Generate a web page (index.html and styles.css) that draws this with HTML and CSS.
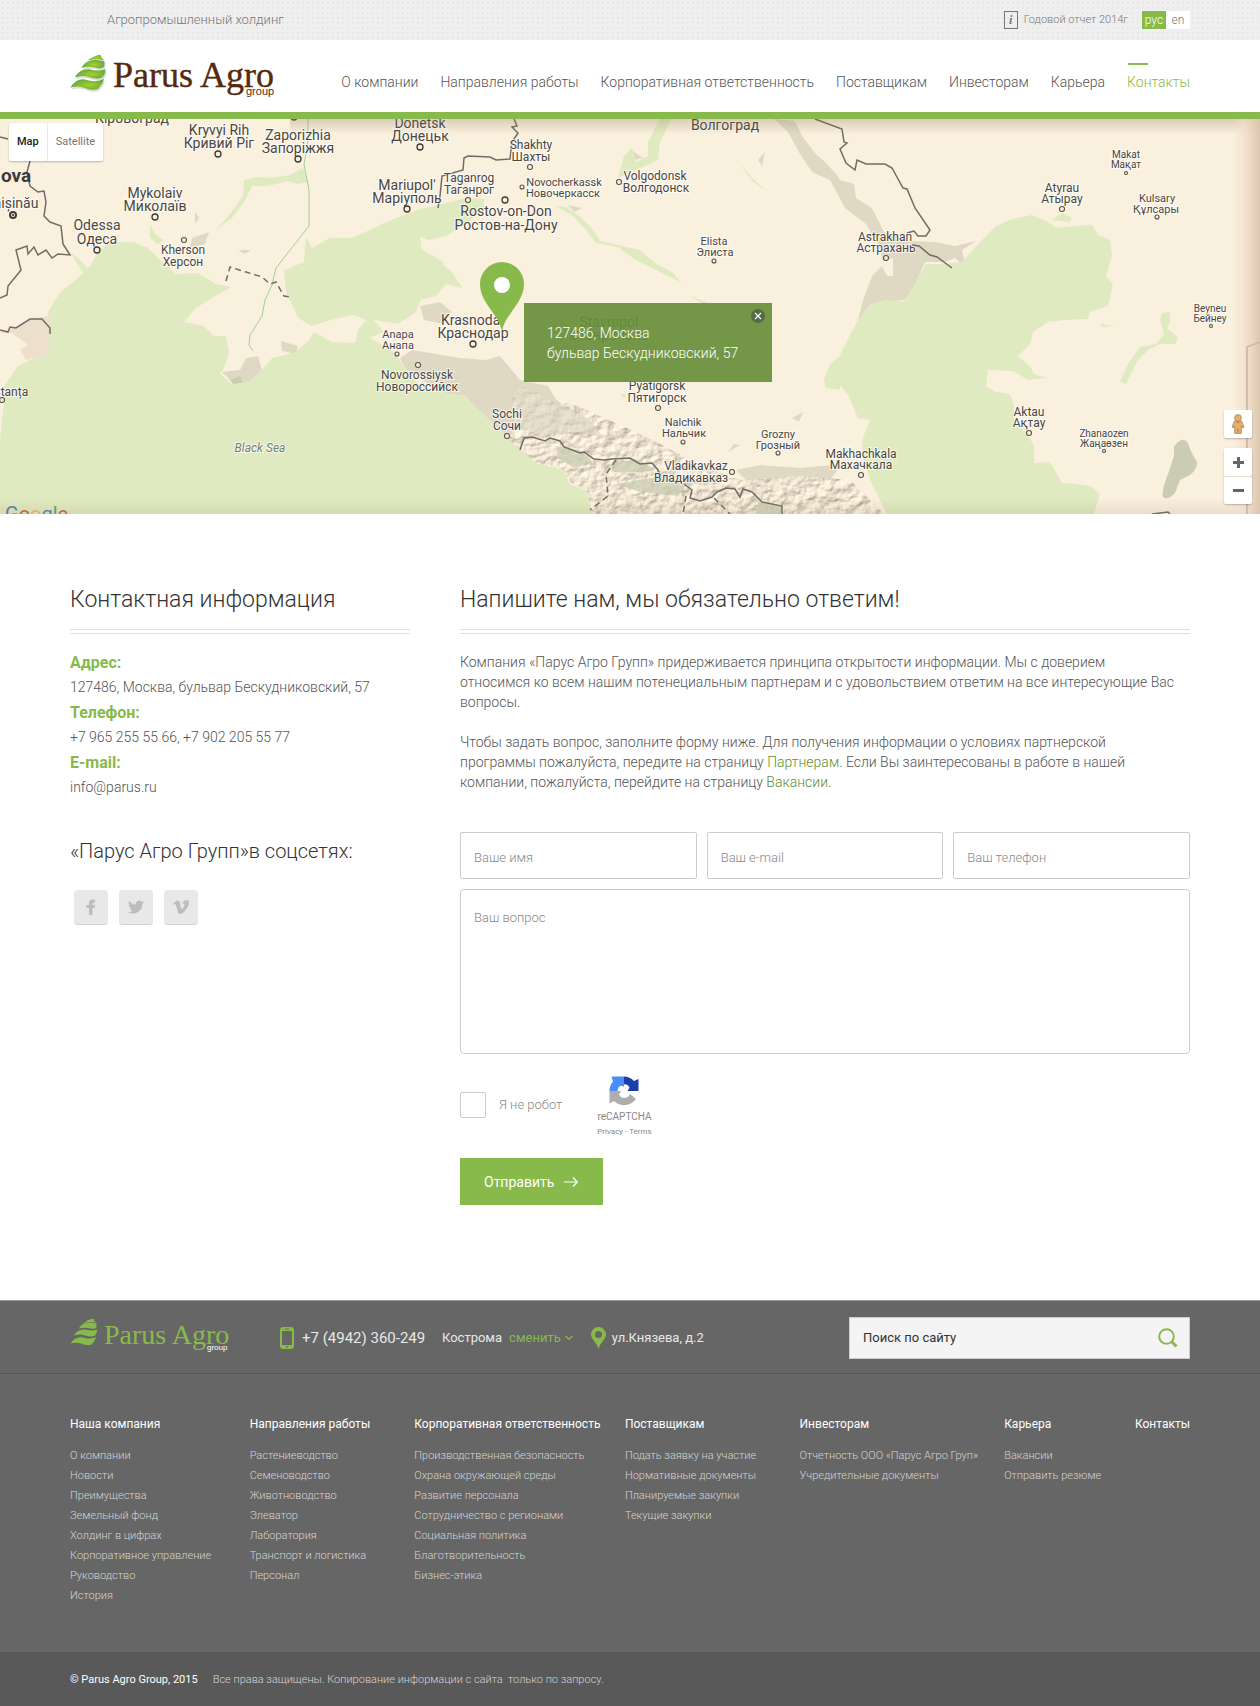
FILE: index.html
```html
<!DOCTYPE html>
<html lang="ru">
<head>
<meta charset="utf-8">
<title>Контакты — Parus Agro Group</title>
<link rel="stylesheet" href="styles.css">
</head>
<body>
<svg width="0" height="0" class="defs" aria-hidden="true">
  <defs>
    <symbol id="leaf" viewBox="0 0 108 112">
      <path d="M52 20 Q70 5 91 2 Q94 12 103 19 Q80 12 52 20Z"/>
      <path d="M33 42 Q47 17 77 18 Q92 20 104 22 L103 38 Q98 46 82 42 Q55 35 33 42Z"/>
      <path d="M14 71 Q28 44 58 46 Q86 54 107 46 Q106 62 98 70 Q84 78 60 70 Q34 62 14 71Z"/>
      <path d="M0 102 Q18 74 44 77 Q78 88 103 76 Q98 92 84 106 Q64 112 42 102 Q20 95 0 102Z"/>
    </symbol>
  </defs>
</svg>

<div class="topbar">
  <div class="wrap topbar-row">
    <p class="tagline">Агропромышленный холдинг</p>
    <a class="report" href="#"><span class="info-icon">i</span>Годовой отчет 2014г</a>
    <div class="langs"><a class="lang lang-on" href="#">рус</a><a class="lang" href="#">en</a></div>
  </div>
</div>

<header class="header">
  <div class="wrap header-row">
    <a class="logo" href="#" aria-label="Parus Agro group">
      <svg width="210" height="48" viewBox="0 0 210 48">
        <defs>
          <radialGradient id="leafFill" cx=".55" cy=".55" r=".6">
            <stop offset="0" stop-color="#a9cf2b"/><stop offset="1" stop-color="#58a83a"/>
          </radialGradient>
        </defs>
        <use href="#leaf" x="1" y="4" width="36" height="37" fill="#dcdcdc"/>
        <use href="#leaf" x="0" y="2" width="36" height="37" fill="url(#leafFill)"/>
        <text class="logo-name" x="43" y="35">Parus Agro</text>
        <text class="logo-sub" x="176" y="43">group</text>
      </svg>
    </a>
    <nav class="nav">
      <a href="#">О компании</a>
      <a href="#">Направления работы</a>
      <a href="#">Корпоративная ответственность</a>
      <a href="#">Поставщикам</a>
      <a href="#">Инвесторам</a>
      <a href="#">Карьера</a>
      <a href="#" class="nav-on">Контакты</a>
    </nav>
  </div>
</header>

<section class="map">
  <svg class="map-canvas" viewBox="0 119 1260 395" preserveAspectRatio="xMidYMid slice">
    <defs>
      <filter id="relief" x="0" y="0" width="100%" height="100%" color-interpolation-filters="sRGB">
        <feTurbulence type="fractalNoise" baseFrequency=".09 .12" numOctaves="4" seed="4" result="n"/>
        <feDiffuseLighting in="n" surfaceScale="2" diffuseConstant="1.12" lighting-color="#f4e8d4" result="l"><feDistantLight azimuth="225" elevation="60"/></feDiffuseLighting>
        <feComposite in="l" in2="SourceGraphic" operator="in"/>
      </filter>
      <linearGradient id="topShade" x2="0" y2="1"><stop stop-color="#8a7550" stop-opacity=".28"/><stop offset="1" stop-color="#8a7550" stop-opacity="0"/></linearGradient>
      <linearGradient id="botShade" x2="0" y2="1"><stop stop-color="#8a7550" stop-opacity="0"/><stop offset="1" stop-color="#8a7550" stop-opacity=".14"/></linearGradient>
      <linearGradient id="rightShade"><stop stop-color="#f3dcc8" stop-opacity="0"/><stop offset=".4" stop-color="#f3dcc8" stop-opacity=".6"/><stop offset="1" stop-color="#d8c2aa" stop-opacity=".9"/></linearGradient>
    </defs>
    <rect y="119" width="1260" height="395" fill="#faf0de"/>
    <!-- relief -->
    <g fill="#dfd9c4">
      <path d="M774 119 L795 121 L802 136 L815 153 L826 163 L836 174 L840 180 L854 184 L856 198 L872 208 L884 232 L910 241 L935 242 L955 246 L976 241 L962 250 L966 268 L955 258 L945 262 L925 262 L915 285 L905 300 L885 302 L868 308 L857 324 L863 300 L872 276 L884 264 L878 244 L866 224 L845 208 L830 180 L812 172 L800 154 L788 132Z"/>
      <path d="M0 333 L20 325 L34 318 L50 316 L53 330 L47 356 L26 360 L20 350 L28 345 L12 333Z" fill="#ece0cc"/>
      <path d="M400 358 L412 350 L460 358 L486 360 L500 356 L520 380 L548 386 L556 400 L590 420 L600 436 L560 430 L540 440 L520 430 L505 440 L488 420 L465 396 L440 392 L405 368Z"/>
      <path d="M736 470 L760 465 L800 468 L842 464 L830 480 L790 482 L750 484Z"/>
      <path d="M222 372 L240 370 L246 358 L258 356 L262 370 L250 382 L234 384Z"/>
      <path d="M281 341 L298 346 L296 354 L282 351Z M180 322 L186 316 L182 325Z M136 245 L148 248 L146 252Z M238 250 L251 250 L245 254Z M192 238 L209 232 L205 244 L190 248Z M195 212 L199 218 L195 224Z"/>
      <path d="M420 306 L440 302 L452 312 L444 324 L424 320Z M568 205 L582 208 L574 212Z M758 160 L765 152 L762 166Z M630 149 L643 158 L634 160Z M740 445 L728 452 L734 444Z M792 418 L803 412 L799 422Z"/>
    </g>
    <path d="M505 440 L516 424 L512 396 L524 384 L548 400 L575 405 L600 416 L640 434 L668 448 L700 466 L740 480 L800 476 L850 480 L884 514 L592 514 L586 490 L570 482 L562 470 L536 462Z" fill="#f4e9d6" filter="url(#relief)" opacity=".75"/>
    <path d="M490 360 L520 380 L548 388 L560 404 L590 420 L604 438 L570 430 L544 436 L522 424 L512 400Z" fill="#dfd9c4" opacity=".6"/>
    <g fill="#c9cdb2" opacity=".75">
      <path d="M556 446 L580 450 L592 462 L575 468 L558 458Z M612 462 L640 460 L655 470 L640 472 L615 472Z M616 484 L650 478 L690 480 L678 496 L640 492Z M758 502 L782 506 L780 514 L758 514Z"/>
    </g>
    <path d="M1174 447 Q1182 435 1188 443 Q1190 451 1197 462 Q1197 470 1190 475 L1180 480 L1175 493 Q1168 501 1163 497 Q1161 492 1168 474 L1174 456Z" fill="#cbccb2"/>
    <path d="M230 380 L240 376 L243 383 L234 385Z" fill="#cbccb2"/>
    <!-- water -->
    <g fill="#e0eac0">
      <path d="M0 514 L0 440 L2 418 L4 404 L1 392 L8 380 L18 366 L30 360 L46 356 L52 332 L48 312 L60 292 L76 280 L90 266 L98 252 L110 242 L134 242 L150 250 L162 262 L176 274 L198 273 L216 284 L232 287 L212 298 L196 308 L184 322 L204 326 L214 336 L226 336 L229 352 L226 364 L220 374 L232 384 L250 382 L262 370 L272 358 L296 352 L309 340 L314 332 L332 342 L355 343 L358 330 L366 320 L354 315 L330 320 L312 326 L298 318 L294 308 L286 292 L284 270 L304 262 L306 237 L312 248 L330 238 L352 238 L374 228 L396 218 L420 209 L446 203 L466 198 L484 199 L484 208 L466 224 L446 236 L428 240 L420 236 L422 250 L444 262 L432 284 L424 292 L416 312 L398 324 L374 320 L384 332 L370 338 L392 350 L404 366 L420 386 L440 392 L464 396 L490 420 L520 450 L537 463 L563 470 L570 484 L587 491 L592 514Z"/>
      <path d="M887 514 L880 500 L870 480 L863 455 L862 440 L870 420 L858 418 L848 395 L840 385 L835 365 L850 335 L858 320 L870 304 L886 300 L904 302 L914 286 L926 264 L940 264 L962 262 L978 244 L996 226 L1012 219 L1032 215 L1048 222 L1056 228 L1074 226 L1092 225 L1098 235 L1110 240 L1112 256 L1106 276 L1113 284 L1108 306 L1090 312 L1088 319 L1064 320 L1048 322 L1033 332 L1030 344 L1018 356 L1030 366 L1034 374 L1046 378 L1028 380 L1013 371 L988 370 L986 386 L996 392 L1010 394 L1014 404 L1014 420 L1028 435 L1034 446 L1034 463 L1050 462 L1062 483 L1076 484 L1090 486 L1100 494 L1094 514Z"/>
      <path d="M243 196 L244 180 L256 177 L272 178 L290 175 L303 168 L308 182 L298 184 L288 181 L268 186 L252 186 L244 202 L232 218 L216 230 L230 214Z"/>
      <path d="M70 252 L80 260 L94 276 L86 278Z M150 224 L155 234 L164 240 L158 244 L150 238Z"/>
      <path d="M660 119 L671 119 L660 142 L658 160 L640 168 L618 178 L624 156 L632 148 L636 162 L648 156 L648 142Z"/>
      <path d="M555 206 L566 207 L579 216 L592 228 L600 241 L622 246 L640 250 L656 264 L672 272 L681 282 L660 272 L636 260 L618 247 L596 243 L586 230 L572 215Z"/>
      <path d="M420 250 L440 262 L452 272 L462 288 L446 284 L436 296 L420 300Z M690 296 L706 302 L707 298 L706 306Z M737 160 L752 178 L768 192 L752 181Z"/>
      <path d="M1162 313 L1170 312 L1170 322 L1167 328 L1178 338 L1175 344 L1160 344 L1148 350 L1138 360 L1126 384 L1120 382 L1128 364 L1140 347 L1156 344 L1164 334 L1160 320Z"/>
      <path d="M1052 220 L1062 213 L1072 218 L1070 222Z M824 380 L830 364 L840 356 L840 390 L826 388Z M620 394 L626 394 L624 398Z M1100 324 L1116 326 L1102 327Z"/>
    </g>
    <path d="M880 262 L893 258 L893 276 L887 276Z" fill="#faf0de"/>
    <!-- rivers and borders -->
    <g fill="none" stroke="#9fd09a" stroke-width="1">
      <path d="M308 119 L308 140 L304 165 L309 190 L309 226 L276 268 L272 285 L265 300 L262 316 L250 335 L249 345 L253 351"/>
    </g>
    <g fill="none" stroke="#736b66" stroke-width="1.5">
      <path d="M0 137 L8 139 M30 161 L27 172 L30 186 L38 192 L44 191 L46 202 L44 216 L50 222 L61 226 L63 244 L70 255 L58 254 L52 258 L46 250 L38 255 L34 247 L28 254 L27 246 L16 250 L21 270 L8 286 L7 295 L0 298"/>
      <path d="M0 330 L8 332 L10 327 L16 328 L30 319 L42 319 L50 328 L50 334"/>
      <path d="M514 119 L517 126 L512 127 L518 133 L512 142 L510 159 L496 160 L490 157 L468 156 L464 158 L463 170 L442 176 L440 196 L438 208"/>
      <path d="M815 119 L842 129 L844 142 L847 143 L840 149 L846 163 L855 170 L857 160 L866 164 L885 164 L892 168 L903 188 L907 189 L915 208 L930 230 L926 236 L918 236 L914 231 L907 233 M912 245 L919 246 L930 255 L937 257 L952 268"/>
      <path d="M520 450 L524 438 L532 437 L545 441 L550 438 L560 441 L564 447 L580 453 L584 452 L594 459 L604 460 L612 459 L630 458 L640 464 L652 463 L658 470 L660 476 M684 484 L692 490 L690 498 L700 501 L712 497 L717 492 L726 488 L735 489 L740 497 L743 489 L752 492 L762 502 L782 506 L782 514"/>
      <path d="M1260 342 L1247 347 L1247 514 M1152 514 L1168 512 L1170 514"/>
      <path stroke-dasharray="6 4" d="M226 281 L230 267 L246 272 L262 277 L270 284 L276 282 L284 296 L291 297 M616 460 L606 474 L608 496 L590 510 M686 496 L683 514 M714 498 L730 514"/>
    </g>
    <!-- labels -->
    <g class="city city-l">
      <text x="132" y="123">Кіровоград</text>
      <text x="219" y="135">Kryvyi Rih</text><text x="219" y="148">Кривий Ріг</text>
      <text x="298" y="140">Zaporizhia</text><text x="298" y="153">Запоріжжя</text>
      <text x="420" y="128">Donetsk</text><text x="420" y="141">Донецьк</text>
      <text x="407" y="190">Mariupol'</text><text x="407" y="203">Маріуполь</text>
      <text x="155" y="198">Mykolaiv</text><text x="155" y="211">Миколаїв</text>
      <text x="97" y="230">Odessa</text><text x="97" y="244">Одеса</text>
      <text x="16" y="208">hișinău</text>
      <text x="506" y="216">Rostov-on-Don</text><text x="506" y="230">Ростов-на-Дону</text>
      <text x="725" y="130">Волгоград</text>
      <text x="473" y="325">Krasnodar</text><text x="473" y="338">Краснодар</text>
      <text x="609" y="327">Stavropol</text><text x="609" y="340">Ставрополь</text>
    </g>
    <g class="city city-m">
      <text x="183" y="254">Kherson</text><text x="183" y="266">Херсон</text>
      <text x="469" y="182">Taganrog</text><text x="469" y="194">Таганрог</text>
      <text x="531" y="149">Shakhty</text><text x="531" y="161">Шахты</text>
      <text x="655" y="180">Volgodonsk</text><text x="656" y="192">Волгодонск</text>
      <text x="885" y="241">Astrakhan</text><text x="886" y="252">Астрахань</text>
      <text x="1062" y="192">Atyrau</text><text x="1062" y="203">Атырау</text>
      <text x="1029" y="416">Aktau</text><text x="1029" y="427">Ақтау</text>
      <text x="861" y="458">Makhachkala</text><text x="861" y="469">Махачкала</text>
      <text x="696" y="470">Vladikavkaz</text><text x="691" y="482">Владикавказ</text>
      <text x="657" y="390">Pyatigorsk</text><text x="657" y="402">Пятигорск</text>
      <text x="507" y="418">Sochi</text><text x="507" y="430">Сочи</text>
      <text x="417" y="379">Novorossiysk</text><text x="417" y="391">Новороссийск</text>
      <text x="8" y="396">nstanța</text>
    </g>
    <g class="city city-s">
      <text x="564" y="186">Novocherkassk</text><text x="563" y="197">Новочеркасск</text>
      <text x="714" y="245">Elista</text><text x="715" y="256">Элиста</text>
      <text x="1157" y="202">Kulsary</text><text x="1156" y="213">Құлсары</text>
      <text x="778" y="438">Grozny</text><text x="778" y="449">Грозный</text>
      <text x="683" y="426">Nalchik</text><text x="684" y="437">Нальчик</text>
      <text x="398" y="338">Anapa</text><text x="398" y="349">Анапа</text>
    </g>
    <g class="city city-xs">
      <text x="1126" y="158">Makat</text><text x="1126" y="168">Мақат</text>
      <text x="1210" y="312">Beyneu</text><text x="1210" y="322">Бейнеу</text>
      <text x="1104" y="437">Zhanaozen</text><text x="1104" y="447">Жаңаөзен</text>
    </g>
    <text class="sea" x="260" y="452">Black Sea</text>
    <text class="country" x="1" y="182">ova</text>
    <g fill="#faf0de" stroke="#3d3a36" stroke-width="1.3">
      <circle cx="218" cy="154" r="3"/><circle cx="298" cy="159" r="3"/><circle cx="420" cy="147" r="3"/><circle cx="407" cy="209" r="3"/><circle cx="155" cy="217" r="3"/><circle cx="97" cy="250" r="3"/><circle cx="505" cy="200" r="3"/><circle cx="473" cy="344" r="3"/><circle cx="13" cy="215" r="3" stroke-width="2"/><circle cx="294" cy="117" r="3"/>
    </g>
    <circle cx="13" cy="215" r="1" fill="#222"/>
    <g fill="#faf0de" stroke="#55514b" stroke-width="1.1">
      <circle cx="184" cy="240" r="2.5"/><circle cx="468" cy="200" r="2.5"/><circle cx="530" cy="167" r="2.5"/><circle cx="619" cy="182" r="2.5"/><circle cx="522" cy="187" r="2"/><circle cx="714" cy="261" r="2"/><circle cx="886" cy="258" r="2.5"/><circle cx="1062" cy="209" r="2.5"/><circle cx="1157" cy="217" r="2"/><circle cx="1029" cy="433" r="2.5"/><circle cx="861" cy="475" r="2.5"/><circle cx="778" cy="453" r="2"/><circle cx="683" cy="442" r="2"/><circle cx="732" cy="472" r="2.5"/><circle cx="658" cy="408" r="2.5"/><circle cx="507" cy="436" r="2.5"/><circle cx="397" cy="354" r="2"/><circle cx="418" cy="365" r="2.5"/><circle cx="2" cy="400" r="2.5"/><circle cx="1126" cy="173" r="1.5"/><circle cx="1211" cy="326" r="1.5"/><circle cx="1104" cy="451" r="1.5"/>
    </g>
    <text class="google" x="5" y="521"><tspan fill="#5b7fc0">G</tspan><tspan fill="#c8604f">o</tspan><tspan fill="#e8b878">o</tspan><tspan fill="#5b7fc0">g</tspan><tspan fill="#6aa068">l</tspan><tspan fill="#c8604f">e</tspan></text>
    <rect x="290" y="119" width="970" height="15" fill="url(#topShade)"/>
    <rect y="498" width="1260" height="16" fill="url(#botShade)"/>
    <rect x="1232" y="119" width="28" height="395" fill="url(#rightShade)"/>
    <path d="M502 331 C499 314 480 303 480 284 A22 22 0 0 1 524 284 C524 303 505 314 502 331Z" fill="#87ba4b"/>
    <circle cx="502" cy="285" r="8" fill="#fff"/>
  </svg>
  <div class="map-types"><button type="button" class="map-type map-type-on">Map</button><button type="button" class="map-type">Satellite</button></div>
  <div class="balloon">
    <p>127486, Москва<br>бульвар Бескудниковский, 57</p>
    <button type="button" class="balloon-close" aria-label="Закрыть">
      <svg width="14" height="14" viewBox="0 0 14 14"><circle cx="7" cy="7" r="7" fill="#566b45"/><path d="M4 4 L10 10 M10 4 L4 10" stroke="#fff" stroke-width="1.200"/></svg>
    </button>
  </div>
  <div class="map-tools">
    <button type="button" class="tool" aria-label="Street View">
      <svg width="14" height="20" viewBox="0 0 14 20" fill="#e6b06c" stroke="#a77c45" stroke-width=".7"><path d="M3.500 7 H10.500 L13 13 L11.500 14 L10.300 12 V19.500 H7.500 V15 H6.500 V19.500 H3.700 V12 L2.500 14 L1 13Z"/><circle cx="7" cy="4" r="3.400"/><path d="M5.500 7.500 L7 9.500 L8.500 7.500Z" fill="#d9694b" stroke="none"/></svg>
    </button>
    <div class="zoom">
      <button type="button" class="tool" aria-label="Приблизить"><svg width="11" height="11"><path d="M0 5.500H11M5.500 0V11" stroke="#666" stroke-width="3"/></svg></button>
      <button type="button" class="tool" aria-label="Отдалить"><svg width="11" height="11"><path d="M0 5.500H11" stroke="#666" stroke-width="3"/></svg></button>
    </div>
  </div>
</section>

<main class="wrap content">
  <section class="info">
    <h1 class="title">Контактная информация</h1>
    <dl class="contacts">
      <dt>Адрес:</dt><dd>127486, Москва, бульвар Бескудниковский, 57</dd>
      <dt>Телефон:</dt><dd>+7 965 255 55 66, +7 902 205 55 77</dd>
      <dt>E-mail:</dt><dd>info@parus.ru</dd>
    </dl>
    <h2 class="subtitle">«Парус Агро Групп»в соцсетях:</h2>
    <div class="socials">
      <a href="#" class="social" aria-label="Facebook"><svg width="18" height="18" viewBox="0 0 18 18"><path d="M7 17V10H4.500V7H7V5Q7 1.500 10.500 1.500H13V4.500H11.300Q10.500 4.500 10.500 5.300V7H13L12.600 10H10.500V17Z"/></svg></a>
      <a href="#" class="social" aria-label="Twitter"><svg width="16" height="16" viewBox="0 0 24 24"><path d="M24 4.600a10 10 0 0 1-2.800.8 5 5 0 0 0 2.100-2.700 10 10 0 0 1-3.100 1.200 4.900 4.900 0 0 0-8.400 4.500A14 14 0 0 1 1.700 3.100a4.900 4.900 0 0 0 1.500 6.600 5 5 0 0 1-2.200-.6v.1a4.900 4.900 0 0 0 3.900 4.800 5 5 0 0 1-2.200.1 4.900 4.900 0 0 0 4.600 3.400A10 10 0 0 1 0 19.500 14 14 0 0 0 21.500 7.100 10 10 0 0 0 24 4.600z"/></svg></a>
      <a href="#" class="social" aria-label="Vimeo"><svg width="16" height="16" viewBox="0 0 24 24"><path d="M24 6.500c-.1 2.300-1.700 5.500-4.900 9.600-3.300 4.300-6.100 6.400-8.400 6.400-1.400 0-2.600-1.300-3.600-3.900L5.200 11.500C4.500 8.900 3.700 7.600 2.900 7.600c-.2 0-.8.400-1.800 1.100L0 7.300c1.200-1 2.300-2.100 3.500-3.100C5 2.900 6.200 2.200 7 2.100c1.900-.2 3 1.100 3.500 3.800.5 2.900.8 4.700 1 5.400.5 2.500 1.100 3.700 1.800 3.700.5 0 1.300-.8 2.300-2.400s1.600-2.900 1.600-3.700c.2-1.400-.4-2.100-1.600-2.100-.6 0-1.200.1-1.800.4 1.200-3.900 3.500-5.800 6.800-5.700 2.500.1 3.600 1.700 3.400 5z"/></svg></a>
    </div>
  </section>

  <section class="write">
    <h2 class="title">Напишите нам, мы обязательно ответим!</h2>
    <p class="text">Компания «Парус Агро Групп» придерживается принципа открытости информации. Мы с доверием<br>относимся ко всем нашим потенециальным партнерам и с удовольствием ответим на все интересующие Вас<br>вопросы.</p>
    <p class="text">Чтобы задать вопрос, заполните форму ниже. Для получения информации о условиях партнерской<br>программы пожалуйста, передите на страницу <a href="#">Партнерам</a>. Если Вы заинтересованы в работе в нашей<br>компании, пожалуйста, перейдите на страницу <a href="#">Вакансии</a>.</p>
    <form class="form">
      <div class="fields">
        <input class="field" type="text" placeholder="Ваше имя" aria-label="Ваше имя">
        <input class="field" type="email" placeholder="Ваш e-mail" aria-label="Ваш e-mail">
        <input class="field" type="tel" placeholder="Ваш телефон" aria-label="Ваш телефон">
      </div>
      <textarea class="field area" placeholder="Ваш вопрос" aria-label="Ваш вопрос"></textarea>
      <div class="robot-row">
        <label class="robot"><input type="checkbox" class="check">Я не робот</label>
        <div class="captcha">
          <svg width="30" height="30" viewBox="0 0 30 30">
            <path d="M0.500 15 A14.500 14.500 0 0 1 4 5.500 L2.500 0.500 H15 V11 Q12.500 9 10.500 10.500 Q8.500 12 8.500 15Z" fill="#4a8df8"/>
            <path d="M15 0.500 A14.500 14.500 0 0 1 25 5 L29.500 3 V15 H18.500 L20.500 11.500 Q18.500 7.500 15 8.500Z" fill="#1f3fa8"/>
            <path d="M0.500 15 H12 L10 18.500 Q11.500 22 16 22 Q19.500 21.500 21 18 L27 23 A14.500 14.500 0 0 1 5 25 L0.500 27.500Z" fill="#aeaeae"/>
          </svg>
          <span class="captcha-name">reCAPTCHA</span>
          <span class="captcha-links"><a href="#">Privacy</a> - <a href="#">Terms</a></span>
        </div>
      </div>
      <button type="submit" class="submit">Отправить<svg width="14" height="10" viewBox="0 0 14 10" fill="none" stroke="#fff" stroke-width="1.200"><path d="M0 5H13M9 0.500L13.300 5L9 9.500"/></svg></button>
    </form>
  </section>
</main>

<footer class="footer">
  <div class="foot-top">
    <div class="wrap foot-row">
      <a class="foot-logo" href="#" aria-label="Parus Agro group">
        <svg width="164" height="36" viewBox="0 0 164 36">
          <use href="#leaf" x="0" y="0" width="28" height="28" fill="#87ba4b"/>
          <text class="foot-name" x="34" y="26">Parus Agro</text>
          <text class="foot-sub" x="137" y="32">group</text>
        </svg>
      </a>
      <a class="phone" href="#"><svg width="14" height="22" viewBox="0 0 14 22"><path fill="#87ba4b" fill-rule="evenodd" d="M3 0H11Q14 0 14 3V19Q14 22 11 22H3Q0 22 0 19V3Q0 0 3 0ZM2 4V18H12V4ZM5 1.500H9V2.500H5ZM6 19.300V20.500H8V19.300Z"/></svg>+7 (4942) 360-249</a>
      <div class="city-pick">Кострома <a href="#">сменить<svg width="8" height="6" viewBox="0 0 8 6" fill="none" stroke="#87ba4b" stroke-width="1.200"><path d="M0.500 1L4 4.500L7.500 1"/></svg></a></div>
      <div class="street"><svg width="15" height="22" viewBox="0 0 15 22"><path fill="#87ba4b" fill-rule="evenodd" d="M7.500 22C6 16 0 12 0 7.500A7.500 7.500 0 0 1 15 7.500C15 12 9 16 7.500 22ZM7.500 4A3.500 3.500 0 1 0 7.500 11A3.500 3.500 0 0 0 7.500 4Z"/></svg>ул.Князева, д.2</div>
      <form class="search">
        <input type="search" placeholder="Поиск по сайту" aria-label="Поиск по сайту">
        <button type="submit" aria-label="Найти"><svg width="20" height="20" viewBox="0 0 20 20" fill="none" stroke="#87ba4b"><circle cx="8.500" cy="8.500" r="7.300" stroke-width="2"/><path d="M13.500 13.500L18.500 18.500" stroke-width="3"/></svg></button>
      </form>
    </div>
  </div>
  <div class="wrap foot-menu">
    <div><h3>Наша компания</h3><ul><li><a href="#">О компании</a></li><li><a href="#">Новости</a></li><li><a href="#">Преимущества</a></li><li><a href="#">Земельный фонд</a></li><li><a href="#">Холдинг в цифрах</a></li><li><a href="#">Корпоративное управление</a></li><li><a href="#">Руководство</a></li><li><a href="#">История</a></li></ul></div>
    <div><h3>Направления работы</h3><ul><li><a href="#">Растениеводство</a></li><li><a href="#">Семеноводство</a></li><li><a href="#">Животноводство</a></li><li><a href="#">Элеватор</a></li><li><a href="#">Лаборатория</a></li><li><a href="#">Транспорт и логистика</a></li><li><a href="#">Персонал</a></li></ul></div>
    <div><h3>Корпоративная ответственность</h3><ul><li><a href="#">Производственная безопасность</a></li><li><a href="#">Охрана окружающей среды</a></li><li><a href="#">Развитие персонала</a></li><li><a href="#">Сотрудничество с регионами</a></li><li><a href="#">Социальная политика</a></li><li><a href="#">Благотворительность</a></li><li><a href="#">Бизнес-этика</a></li></ul></div>
    <div><h3>Поставщикам</h3><ul><li><a href="#">Подать заявку на участие</a></li><li><a href="#">Нормативные документы</a></li><li><a href="#">Планируемые закупки</a></li><li><a href="#">Текущие закупки</a></li></ul></div>
    <div><h3>Инвесторам</h3><ul><li><a href="#">Отчетность ООО «Парус Агро Груп»</a></li><li><a href="#">Учредительные документы</a></li></ul></div>
    <div><h3>Карьера</h3><ul><li><a href="#">Вакансии</a></li><li><a href="#">Отправить резюме</a></li></ul></div>
    <div><h3>Контакты</h3></div>
  </div>
  <div class="foot-bottom">
    <div class="wrap legal"><span class="copy">© Parus Agro Group, 2015</span><span>Все права защищены. Копирование информации с сайта&nbsp; только по запросу.</span></div>
  </div>
</footer>
</body>
</html>
```
FILE: styles.css
```css
*, ::before, ::after { box-sizing: border-box; }
body { margin: 0; background: #fff; color: #555; font: 300 14px/20px Roboto, "Liberation Sans", sans-serif; }
h1, h2, h3, p, dl, dd, ul { margin: 0; padding: 0; font-weight: inherit; }
ul { list-style: none; }
a { color: inherit; text-decoration: none; }
button, input, textarea { font: inherit; color: inherit; border: 0; padding: 0; margin: 0; background: none; }
svg { display: block; flex: none; }
.defs { position: absolute; }
.wrap { padding-left: 70px; padding-right: 70px; }

.topbar { background: #efefef radial-gradient(circle, #e5e5e5 1px, transparent 1px) 0 0 / 5px 5px; font-size: 13px; color: #777; }
.topbar-row { display: flex; align-items: center; height: 40px; }
.tagline { margin: 0 auto 0 37px; }
.report { display: flex; align-items: center; gap: 6px; font-size: 11px; margin-right: 14px; }
.info-icon { width: 14px; height: 18px; border: 1px solid #777; text-align: center; font: italic 700 12px/16px "Liberation Serif", serif; }
.langs { display: flex; font-size: 12px; line-height: 18px; }
.lang { width: 24px; text-align: center; background: #fff; }
.lang-on { background: #87ba4b; color: #fff; }

.header { border-bottom: 7px solid #87ba4b; }
.header-row { display: flex; justify-content: space-between; align-items: center; height: 72px; }
.logo-name { font: 36px "Liberation Serif", serif; fill: #542a0c; stroke: #542a0c; stroke-width: .4px; }
.logo-sub { font: 11px "Liberation Sans", sans-serif; fill: #542a0c; }
.nav { display: flex; gap: 22px; padding-top: 12px; white-space: nowrap; }
.nav-on { position: relative; color: #87ba4b; }
.nav-on::before { content: ""; position: absolute; left: 1px; top: -9px; width: 20px; height: 2px; background: #87ba4b; }

.map { position: relative; height: 395px; overflow: hidden; }
.map-canvas { width: 100%; height: 100%; }
.city { font-family: Roboto, sans-serif; font-weight: 400; fill: #4a4640; text-anchor: middle; }
.city text, .sea { paint-order: stroke; stroke: #fff; stroke-opacity: .7; stroke-width: 2px; }
.city-l { font-size: 14px; }
.city-m { font-size: 12px; }
.city-s { font-size: 11px; }
.city-xs { font-size: 10px; }
.sea { font: italic 400 12px Roboto, sans-serif; fill: #76806a; text-anchor: middle; }
.country { font: 700 19px Roboto, sans-serif; fill: #3d3a36; }
.google { font: 400 20px Roboto, sans-serif; }
.map-types { position: absolute; left: 9px; top: 4px; display: flex; background: #fff; border-radius: 2px; box-shadow: 0 1px 2px rgba(0,0,0,.25); font-size: 11px; font-weight: 400; }
.map-type { height: 38px; padding: 0 8px; color: #7d736b; }
.map-type-on { color: #222; border-right: 1px solid #f3e6d2; font-weight: 500; }
.balloon { position: absolute; left: calc(50% - 106px); top: 184px; width: 248px; padding: 20px 23px 19px; background: rgba(103,143,58,.92); color: #fff; white-space: nowrap; }
.balloon-close { position: absolute; right: 7px; top: 6px; }
.map-tools { position: absolute; right: 8px; bottom: 10px; display: flex; flex-direction: column; gap: 10px; }
.tool { display: flex; align-items: center; justify-content: center; width: 28px; height: 28px; background: #fff; border-radius: 2px; }
.map-tools > .tool, .zoom { box-shadow: 0 1px 2px rgba(0,0,0,.25); border-radius: 2px; }
.zoom .tool + .tool { border-top: 1px solid #e6dccb; }

.content { display: grid; grid-template-columns: 340px 1fr; gap: 50px; padding-top: 71px; padding-bottom: 95px; }
.title { font-size: 23px; line-height: 30px; color: #333; margin-bottom: 16px; white-space: nowrap; }
.title::after { content: ""; display: block; height: 5px; margin-top: 14px; border: solid #e0e0e0; border-width: 1px 0; }
.write .title { margin-bottom: 18px; }
.contacts { line-height: 25px; white-space: nowrap; }
.contacts dt { color: #87ba4b; font-size: 16px; font-weight: 700; }
.subtitle { font-size: 20px; line-height: 30px; color: #333; margin-top: 36px; white-space: nowrap; }
.socials { display: flex; gap: 11px; margin: 24px 0 0 4px; }
.social { display: flex; align-items: center; justify-content: center; width: 34px; height: 35px; background: #e8e8e8; border-bottom: 1px solid #d2d2d2; border-radius: 4px; fill: #bdbdbd; }
.text { margin-bottom: 20px; white-space: nowrap; }
.text a { color: #5f8d2c; }
.form { margin-top: 40px; }
.fields { display: grid; grid-template-columns: repeat(3, 1fr); gap: 10px; }
.field { width: 100%; height: 47px; padding: 4px 13px 0; border: 1px solid #ccc; border-radius: 2px; font-size: 13px; background: #fff; }
.field::placeholder { color: #888; opacity: 1; }
.area { display: block; height: 165px; margin-top: 10px; padding-top: 18px; border-radius: 4px; resize: none; }
.robot-row { display: flex; align-items: flex-start; gap: 35px; margin-top: 22px; font-size: 13px; color: #888; }
.robot { display: flex; align-items: center; gap: 13px; margin-top: 16px; }
.check { appearance: none; width: 26px; height: 26px; border: 1px solid #ccc; border-radius: 2px; }
.captcha { display: flex; flex-direction: column; align-items: center; font-weight: 400; }
.captcha-name { font-size: 10px; line-height: 12px; margin-top: 5px; color: #888; }
.captcha-links { font-size: 8px; line-height: 12px; margin-top: 3px; }
.submit { display: flex; align-items: center; gap: 10px; height: 47px; margin-top: 20px; padding: 0 25px 0 24px; background: #87ba4b; color: #fff; font-weight: 400; }

.footer { background: #666; color: #d4d4d4; border-top: 1px solid #999; font-size: 11px; }
.foot-top { border-bottom: 1px solid #575757; }
.foot-row { display: flex; align-items: center; height: 72px; padding-top: 2px; font-size: 13px; font-weight: 400; color: #e8e8e8; white-space: nowrap; }
.foot-name { font: 28px "Liberation Serif", serif; fill: #87ba4b; }
.foot-sub { font: 8px "Liberation Sans", sans-serif; fill: #fff; }
.foot-logo { margin-top: -4px; }
.phone { display: flex; align-items: center; gap: 8px; width: 162px; margin-left: 46px; font-size: 15px; }
.city-pick { display: flex; gap: 7px; }
.city-pick a { display: flex; align-items: center; gap: 4px; color: #87ba4b; }
.street { display: flex; align-items: center; gap: 6px; margin-left: 18px; }
.search { display: flex; align-items: center; width: 341px; height: 42px; margin-left: auto; padding: 0 11px 0 13px; background: #f4f4f4; border: 1px solid #ccc; }
.search input { flex: 1; min-width: 0; }
.search input::placeholder { color: #333; opacity: 1; }
.foot-menu { display: grid; grid-template-columns: 180fr 165fr 211fr 175fr 205fr 131fr 54fr; height: 278px; padding-top: 40px; line-height: 20px; white-space: nowrap; }
.foot-menu h3 { font-size: 12px; font-weight: 400; color: #fff; margin-bottom: 12px; }
.foot-bottom { background: #595959; }
.legal { display: flex; gap: 15px; align-items: center; height: 54px; padding-top: 2px; }
.copy { color: #fff; font-weight: 400; }
```
